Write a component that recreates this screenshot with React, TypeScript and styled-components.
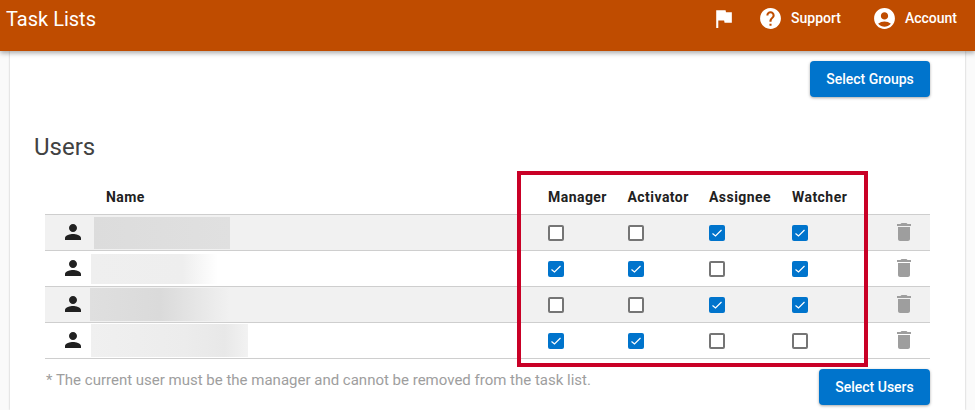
import React from 'react';
import styled, { createGlobalStyle } from 'styled-components';
import { MdFlag, MdHelp, MdAccountCircle, MdPerson, MdDelete } from 'react-icons/md';

const GlobalStyle = createGlobalStyle`
  html, body {
    margin: 0;
    height: 100%;
    overflow: hidden;
    background: #fafafa;
    font-family: Roboto, "Liberation Sans", sans-serif;
  }
`;

const Page = styled.div`
  position: relative;
  height: 410px;
  overflow: hidden;
`;

const Header = styled.header`
  position: relative;
  z-index: 2;
  height: 51px;
  box-sizing: border-box;
  padding: 7px 18px 0 6px;
  display: flex;
  justify-content: space-between;
  align-items: flex-start;
  background: #bf4c00;
  color: #fff;
  box-shadow: 0 2px 5px rgba(0, 0, 0, 0.35);
`;

const Title = styled.h1`
  margin: 0;
  font-size: 20px;
  line-height: 24px;
  font-weight: 400;
`;

const Nav = styled.nav`
  display: flex;
  align-items: center;
  margin-top: -1px;
`;

const NavItem = styled.a<{ $gap: number }>`
  display: flex;
  align-items: center;
  gap: 8px;
  margin-left: ${(p) => p.$gap}px;
  font-size: 14px;
  font-weight: 500;
  height: 24px;
  svg {
    font-size: 25px;
  }
`;

const Card = styled.main`
  margin: 0 10px;
  height: 359px;
  box-sizing: border-box;
  padding: 10px 35px 0 24px;
  background: #fff;
  box-shadow: 0 0 2px rgba(0, 0, 0, 0.25);
`;

const ButtonRow = styled.div`
  display: flex;
  justify-content: flex-end;
`;

const Button = styled.button<{ $width: number }>`
  width: ${(p) => p.$width}px;
  height: 36px;
  padding: 0;
  border: none;
  border-radius: 4px;
  background: #0074cc;
  color: #fff;
  font-family: inherit;
  font-size: 14px;
  font-weight: 500;
  box-shadow: 0 1px 3px rgba(0, 0, 0, 0.35);
`;

const Heading = styled.h2`
  margin: 35px 0 0;
  font-size: 24px;
  line-height: 30px;
  font-weight: 400;
  color: #424242;
`;

const Table = styled.div`
  margin: 21px 0 0 11px;
`;

const columns = '45px 458px 79.5px 81.5px 83px 86px 1fr';

const HeadRow = styled.div`
  display: grid;
  grid-template-columns: ${columns};
  height: 31px;
  box-sizing: border-box;
  padding-bottom: 3px;
  align-items: center;
  font-size: 14px;
  font-weight: 700;
  letter-spacing: 0.45px;
  color: #212121;
`;

const NameHead = styled.div`
  padding-left: 16px;
`;

const Row = styled.div<{ $shaded: boolean }>`
  display: grid;
  grid-template-columns: ${columns};
  height: 36px;
  box-sizing: border-box;
  align-items: center;
  border-top: 1px solid #cecece;
  background: ${(p) => (p.$shaded ? '#f1f1f1' : '#fff')};
  &:last-child {
    border-bottom: 1px solid #cecece;
    height: 37px;
  }
`;

const PersonCell = styled.div`
  display: flex;
  justify-content: center;
  padding: 0 0 2px 11px;
  color: #212121;
  font-size: 24px;
  svg {
    display: block;
  }
`;

// names are blurred out in the screenshot
const BlurredName = styled.div<{ $left: number; $width: number; $height: number; $fill: string }>`
  margin-left: ${(p) => p.$left}px;
  width: ${(p) => p.$width}px;
  height: ${(p) => p.$height}px;
  background: ${(p) => p.$fill};
`;

const Box = styled.span<{ $checked: boolean }>`
  display: flex;
  align-items: center;
  justify-content: center;
  width: 16px;
  height: 16px;
  box-sizing: border-box;
  border-radius: 2px;
  border: ${(p) => (p.$checked ? 'none' : '2px solid #757575')};
  background: ${(p) => (p.$checked ? '#0074cc' : '#fff')};
`;

const TrashCell = styled.div`
  display: flex;
  justify-content: center;
  padding-bottom: 2px;
  color: #9e9e9e;
  font-size: 24px;
  svg {
    display: block;
  }
`;

const Footer = styled.div`
  display: flex;
  justify-content: space-between;
  align-items: flex-start;
  margin: 10px 0 0 11px;
`;

const Note = styled.p`
  margin: 1px 0 0 1px;
  font-size: 15px;
  line-height: 20px;
  color: #9e9e9e;
`;

const Highlight = styled.div`
  position: absolute;
  left: 517px;
  top: 171px;
  width: 351px;
  height: 196px;
  box-sizing: border-box;
  border: 4px solid #c90026;
  pointer-events: none;
`;

const Checkbox = ({ checked }: { checked: boolean }) => (
  <Box $checked={checked}>
    {checked && (
      <svg width="16" height="16" viewBox="0 0 16 16">
        <polyline points="3.5,8.5 6.5,11 12.5,5" fill="none" stroke="#fff" strokeWidth="1.2" />
      </svg>
    )}
  </Box>
);

const users = [
  { left: 4, width: 136, height: 32, fill: 'linear-gradient(90deg, #dcdcdc, #e0e0e0)', roles: [false, false, true, true] },
  { left: 1, width: 127, height: 30, fill: 'linear-gradient(90deg, #efefef 0%, #eeeeee 72%, #ffffff 100%)', roles: [true, true, false, true] },
  { left: 0, width: 140, height: 33, fill: 'linear-gradient(90deg, #dfdfdf 0%, #dadada 50%, #f1f1f1 100%)', roles: [false, false, true, true] },
  { left: 1, width: 157, height: 33, fill: 'linear-gradient(90deg, #f0f0f0 0%, #ececec 60%, #e8e8e8 85%, #f2f2f2 100%)', roles: [true, true, false, false] },
];

const App: React.FC = () => {
  return (
    <Page>
      <GlobalStyle />
      <Header>
        <Title>Task Lists</Title>
        <Nav>
          <NavItem $gap={0}>
            <MdFlag />
          </NavItem>
          <NavItem $gap={22}>
            <MdHelp />
            Support
          </NavItem>
          <NavItem $gap={31}>
            <MdAccountCircle />
            Account
          </NavItem>
        </Nav>
      </Header>
      <Card>
        <ButtonRow>
          <Button $width={120}>Select Groups</Button>
        </ButtonRow>
        <Heading>Users</Heading>
        <Table>
          <HeadRow>
            <div />
            <NameHead>Name</NameHead>
            <div>Manager</div>
            <div>Activator</div>
            <div>Assignee</div>
            <div>Watcher</div>
          </HeadRow>
          {users.map((user, index) => (
            <Row key={index} $shaded={index % 2 === 0}>
              <PersonCell>
                <MdPerson />
              </PersonCell>
              <BlurredName $left={user.left} $width={user.width} $height={user.height} $fill={user.fill} />
              {user.roles.map((checked, i) => (
                <Checkbox key={i} checked={checked} />
              ))}
              <TrashCell>
                <MdDelete />
              </TrashCell>
            </Row>
          ))}
        </Table>
        <Footer>
          <Note>* The current user must be the manager and cannot be removed from the task list.</Note>
          <Button $width={111}>Select Users</Button>
        </Footer>
      </Card>
      <Highlight />
    </Page>
  );
};

export default App;
